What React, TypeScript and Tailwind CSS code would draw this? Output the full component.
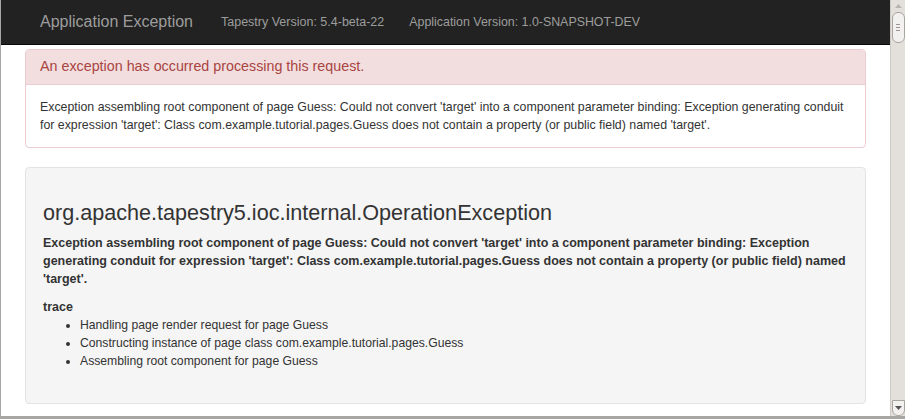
export default function App() {
  const trace = [
    "Handling page render request for page Guess",
    "Constructing instance of page class com.example.tutorial.pages.Guess",
    "Assembling root component for page Guess",
  ];

  return (
    <div
      className="flex w-[905px] h-[419px] overflow-hidden bg-white border-l border-b-[3px] border-[#a8a6a2]"
      style={{ fontFamily: '"Liberation Sans", Arial, sans-serif' }}
    >
      <div className="flex-1 min-w-0 flex flex-col">
        {/* Navbar */}
        <div className="h-[45px] shrink-0 bg-[#222] border-b border-[#080808] flex items-center pl-[39px] text-[#9d9d9d]">
          <span className="text-[16px]">Application Exception</span>
          <span className="text-[12.5px] ml-[28px]">Tapestry Version: 5.4-beta-22</span>
          <span className="text-[12.4px] ml-[25px]">Application Version: 1.0-SNAPSHOT-DEV</span>
        </div>

        <div className="px-[24px] pt-[4px] text-[12.2px] text-[#333]">
          {/* Alert panel */}
          <div className="border border-[#ebccd1] rounded-[4px] overflow-hidden">
            <div className="h-[35px] bg-[#f2dede] border-b border-[#ebccd1] px-[14px] flex items-center text-[14.3px] text-[#a94442]">
              An exception has occurred processing this request.
            </div>
            <div className="px-[14px] pt-[13px] pb-[13px] text-[12.35px] leading-[18px]">
              Exception assembling root component of page Guess: Could not convert 'target' into a component parameter binding: Exception generating
              conduit for expression 'target': Class com.example.tutorial.pages.Guess does not contain a property (or public field) named 'target'.
            </div>
          </div>

          {/* Well */}
          <div className="mt-[19px] h-[237px] bg-[#f5f5f5] border border-[#e3e3e3] rounded-[4px] px-[17px] pt-[33px]">
            <h2 className="text-[21.6px] leading-[24px]">org.apache.tapestry5.ioc.internal.OperationException</h2>
            <p className="mt-[9px] font-bold text-[12.5px] leading-[18px]">
              Exception assembling root component of page Guess: Could not convert 'target' into a component parameter binding: Exception
              generating conduit for expression 'target': Class com.example.tutorial.pages.Guess does not contain a property (or public field) named
              'target'.
            </p>
            <div className="mt-[10px] font-bold text-[12.5px] leading-[18px]">trace</div>
            <ul className="list-disc pl-[37px] leading-[18px]">
              {trace.map((t) => (
                <li key={t}>{t}</li>
              ))}
            </ul>
          </div>
        </div>
      </div>

      {/* Scrollbar */}
      <div className="w-[15px] shrink-0 bg-[#e3e0dc] border-l border-[#cfccc7] flex flex-col items-center">
        <div className="h-[12px] w-full flex items-center justify-center">
          <svg width="7" height="4" viewBox="0 0 7 4">
            <path d="M0 4 L3.5 0 L7 4 Z" fill="#b8b5b0" />
          </svg>
        </div>
        <div className="w-[13px] h-[31px] rounded-[6px] bg-[#f2f1ef] border border-[#a8a5a0] flex flex-col items-center justify-center gap-[2px]">
          <div className="w-[4px] h-px bg-[#9a9792]" />
          <div className="w-[4px] h-px bg-[#9a9792]" />
          <div className="w-[4px] h-px bg-[#9a9792]" />
        </div>
        <div className="flex-1" />
        <div className="w-[13px] h-[16px] rounded-b-[6px] bg-[#f2f1ef] border border-[#a8a5a0] flex items-center justify-center">
          <svg width="7" height="4" viewBox="0 0 7 4">
            <path d="M0 0 L3.5 4 L7 0 Z" fill="#555" />
          </svg>
        </div>
      </div>
    </div>
  );
}
